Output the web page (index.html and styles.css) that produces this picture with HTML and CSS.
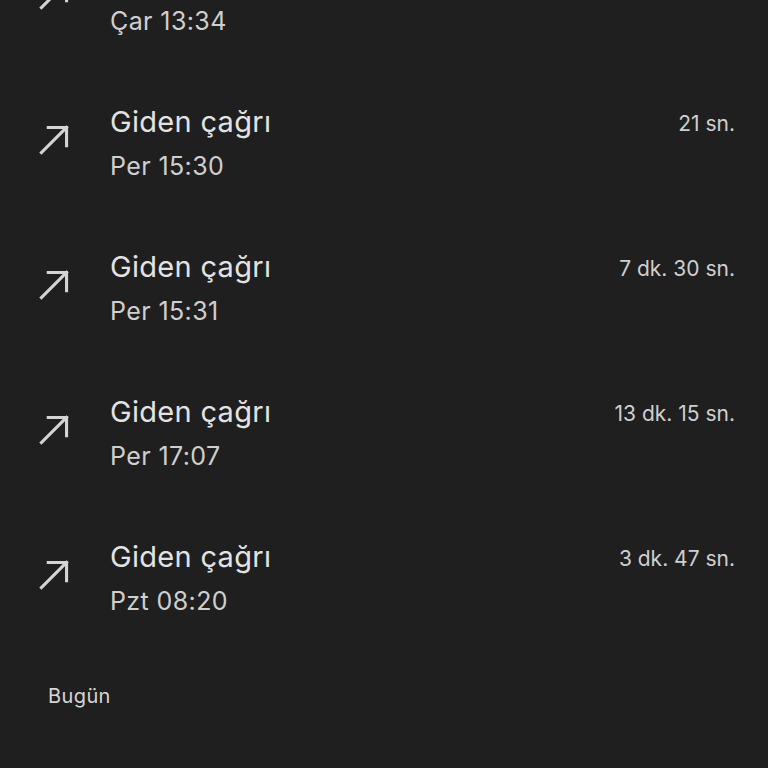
FILE: index.html
```html
<!DOCTYPE html>
<html>
<head>
    <title>Arama geçmişi</title>
    <link rel="stylesheet" href="styles.css">
</head>
<body>
    <div class="call-list">
        <div class="call-row">
            <svg class="call-icon" viewBox="0 0 28 28"><path d="M3 25 L25 3 M9 3 H25 V19"/></svg>
            <div class="call-text">
                <div class="call-title"></div>
                <div class="call-time">Çar 13:34</div>
            </div>
        </div>
        <div class="call-row">
            <svg class="call-icon" viewBox="0 0 28 28"><path d="M3 25 L25 3 M9 3 H25 V19"/></svg>
            <div class="call-text">
                <div class="call-title">Giden çağrı</div>
                <div class="call-time">Per 15:30</div>
            </div>
            <div class="call-duration">21 sn.</div>
        </div>
        <div class="call-row">
            <svg class="call-icon" viewBox="0 0 28 28"><path d="M3 25 L25 3 M9 3 H25 V19"/></svg>
            <div class="call-text">
                <div class="call-title">Giden çağrı</div>
                <div class="call-time">Per 15:31</div>
            </div>
            <div class="call-duration">7 dk. 30 sn.</div>
        </div>
        <div class="call-row">
            <svg class="call-icon" viewBox="0 0 28 28"><path d="M3 25 L25 3 M9 3 H25 V19"/></svg>
            <div class="call-text">
                <div class="call-title">Giden çağrı</div>
                <div class="call-time">Per 17:07</div>
            </div>
            <div class="call-duration">13 dk. 15 sn.</div>
        </div>
        <div class="call-row">
            <svg class="call-icon" viewBox="0 0 28 28"><path d="M3 25 L25 3 M9 3 H25 V19"/></svg>
            <div class="call-text">
                <div class="call-title">Giden çağrı</div>
                <div class="call-time">Pzt 08:20</div>
            </div>
            <div class="call-duration">3 dk. 47 sn.</div>
        </div>
    </div>
    <div class="section-label">Bugün</div>
</body>
</html>
```

FILE: styles.css
```css
html, body {
    margin: 0;
    background-color: #1f1f1f;
    font-family: Inter, "Noto Sans", sans-serif;
    color: #e3e3e3;
    overflow: hidden;
}
.call-list {
    margin-top: -65px;
}
.call-row {
    display: flex;
    align-items: flex-start;
    height: 145px;
    box-sizing: border-box;
    padding: 22px 33px 0 38px;
}
.call-icon {
    width: 32px;
    height: 32px;
    margin-top: 22px;
    margin-right: 40px;
    fill: none;
    stroke: #d4d4d4;
    stroke-width: 2.7;
    stroke-linecap: square;
    flex-shrink: 0;
}
.call-text {
    flex: 1;
}
.call-title {
    font-size: 29px;
    letter-spacing: 0.3px;
    line-height: 40px;
    height: 40px;
    color: #e3e3e3;
}
.call-time {
    font-size: 25px;
    letter-spacing: 0.4px;
    line-height: 40px;
    margin-top: 4px;
    color: #cfcfcf;
}
.call-duration {
    font-size: 21px;
    line-height: 40px;
    margin-top: 2px;
    color: #cfcfcf;
}
.section-label {
    margin: 24px 0 0 48px;
    font-size: 20px;
    letter-spacing: 0.4px;
    line-height: 24px;
    color: #d6d6d6;
}
```
